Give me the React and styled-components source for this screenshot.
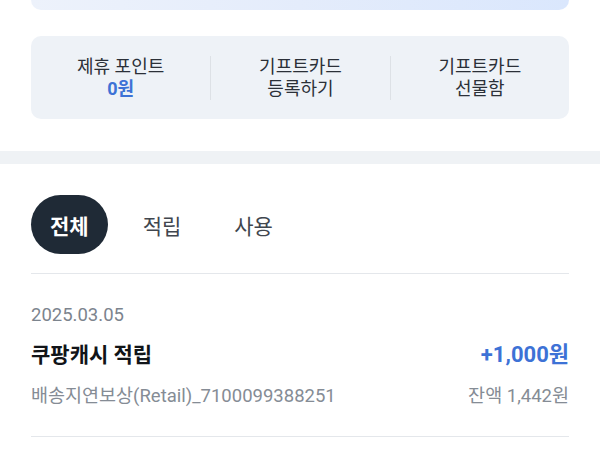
import React from "react";
import styled, { createGlobalStyle } from "styled-components";

const Global = createGlobalStyle`
  html, body { margin: 0; padding: 0; background: #fff; }
  body { font-family: Roboto, "Noto Sans CJK KR", "Noto Sans", sans-serif; -webkit-font-smoothing: antialiased; }
  * { box-sizing: border-box; }
`;

const Page = styled.div`
  width: 600px;
  height: 464px;
  overflow: hidden;
  background: #fff;
`;

const Section = styled.div`
  padding: 0 31px;
`;

const TopCard = styled.div`
  height: 10px;
  border-radius: 0 0 10px 10px;
  background: linear-gradient(90deg, #edf2fb 0%, #e4ecfb 50%, #dae7fd 100%);
`;

const Panel = styled.div`
  margin-top: 26px;
  height: 83px;
  border-radius: 10px;
  background: #eef2f7;
  display: grid;
  grid-template-columns: 1fr 1fr 1fr;
  align-items: center;
`;

const Cell = styled.div`
  display: flex;
  flex-direction: column;
  align-items: center;
  justify-content: center;
  height: 44px;
  border-left: ${(p) => (p.$divider ? "1px solid #dde1e6" : "none")};
  font-size: 18px;
  line-height: 22px;
  color: #2b3038;
`;

const Strong = styled.span`
  color: #3d72d6;
  font-weight: 700;
`;

const Band = styled.div`
  margin-top: 32px;
  height: 13px;
  background: #eff2f5;
`;

const Tabs = styled.div`
  display: flex;
  align-items: center;
  padding-top: 31px;
  padding-bottom: 19px;
  border-bottom: 1px solid #e4e7eb;
`;

const Tab = styled.button`
  border: none;
  font-family: inherit;
  height: 59px;
  padding: 0 ${(p) => (p.$active ? "19px" : "0")};
  margin-right: ${(p) => (p.$active ? "35px" : "53px")};
  border-radius: 30px;
  background: ${(p) => (p.$active ? "#1f2a36" : "transparent")};
  color: ${(p) => (p.$active ? "#fff" : "#40464e")};
  font-size: 21px;
  font-weight: ${(p) => (p.$active ? 700 : 400)};
  cursor: pointer;
`;

const Item = styled.div`
  padding-top: 27px;
  padding-bottom: 26px;
  border-bottom: 1px solid #e4e7eb;
`;

const DateText = styled.div`
  font-size: 18.5px;
  line-height: 28px;
  color: #7c848e;
`;

const Row = styled.div`
  display: flex;
  justify-content: space-between;
  align-items: center;
  margin-top: ${(p) => p.$mt || 0}px;
`;

const Title = styled.div`
  font-size: 21px;
  line-height: 28px;
  font-weight: 700;
  color: #111418;
`;

const Amount = styled.div`
  font-size: 22px;
  line-height: 28px;
  font-weight: 700;
  color: #3d72d6;
`;

const Sub = styled.div`
  font-size: 18.5px;
  line-height: 28px;
  color: #858c95;
`;

export default function App() {
  return (
    <Page>
      <Global />
      <Section>
        <TopCard />
        <Panel>
          <Cell>
            <span>제휴 포인트</span>
            <Strong>0원</Strong>
          </Cell>
          <Cell $divider>
            <span>기프트카드</span>
            <span>등록하기</span>
          </Cell>
          <Cell $divider>
            <span>기프트카드</span>
            <span>선물함</span>
          </Cell>
        </Panel>
      </Section>
      <Band />
      <Section>
        <Tabs>
          <Tab $active>전체</Tab>
          <Tab>적립</Tab>
          <Tab>사용</Tab>
        </Tabs>
        <Item>
          <DateText>2025.03.05</DateText>
          <Row $mt={12}>
            <Title>쿠팡캐시 적립</Title>
            <Amount>+1,000원</Amount>
          </Row>
          <Row $mt={13}>
            <Sub>배송지연보상(Retail)_7100099388251</Sub>
            <Sub>잔액 1,442원</Sub>
          </Row>
        </Item>
      </Section>
    </Page>
  );
}
